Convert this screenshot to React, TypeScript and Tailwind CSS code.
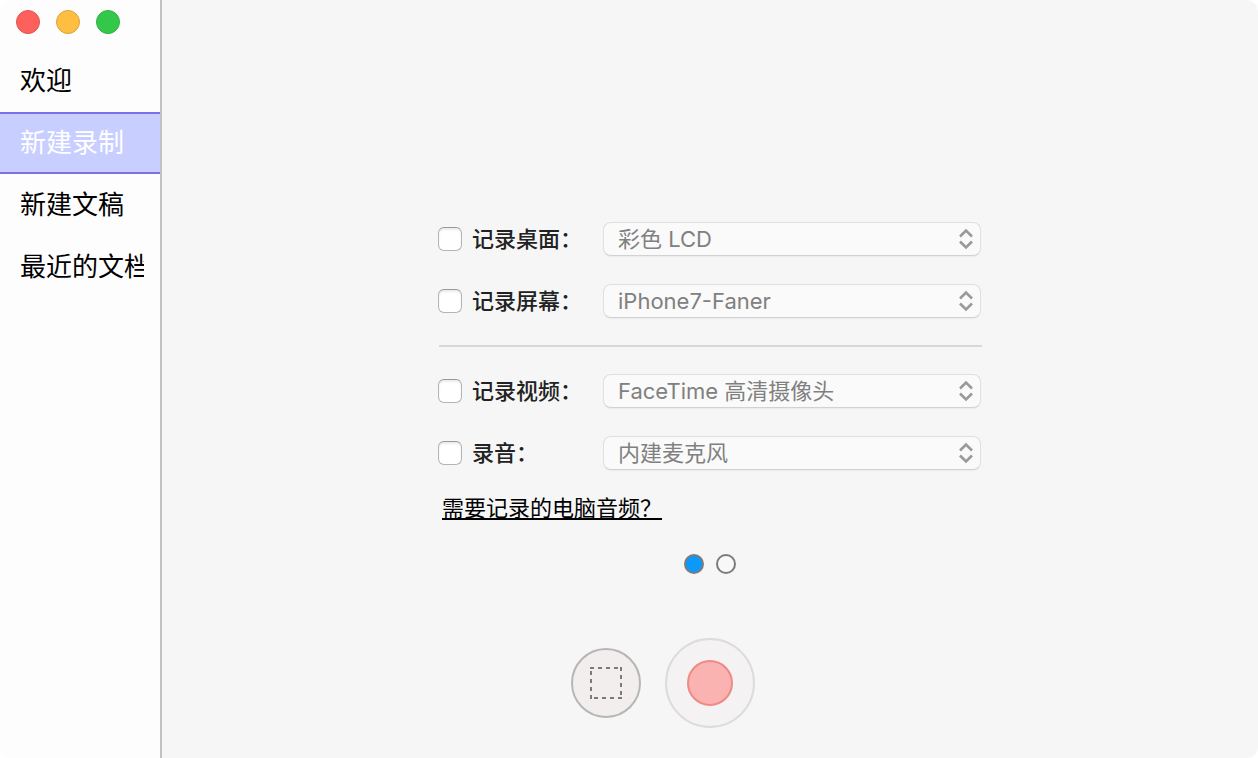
import { useState } from "react";

const navItems = ["欢迎", "新建录制", "新建文稿", "最近的文档"];

const screenSources = [
  { id: "desktop", label: "记录桌面：", option: "彩色 LCD" },
  { id: "screen", label: "记录屏幕：", option: "iPhone7-Faner" },
];

const mediaSources = [
  { id: "video", label: "记录视频：", option: "FaceTime 高清摄像头" },
  { id: "audio", label: "录音：", option: "内建麦克风" },
];

type Source = { id: string; label: string; option: string };

function SourceRow({ id, label, option }: Source) {
  const [enabled, setEnabled] = useState(false);
  return (
    <div className="flex items-center">
      <div className="flex w-[165px] shrink-0 items-center gap-2.5">
        <input
          id={id}
          type="checkbox"
          checked={enabled}
          onChange={(e) => setEnabled(e.target.checked)}
          className="size-6 shrink-0 appearance-none rounded-md border border-[#b4b4b4] border-t-[#989898] bg-white shadow-[inset_0_2px_2px_#ececec] checked:bg-[#0d99fb]"
        />
        <label htmlFor={id} className="whitespace-nowrap font-medium text-[#222222]">
          {label}
        </label>
      </div>
      <div className="relative mr-px min-w-0 flex-1">
        <select
          aria-label={label}
          disabled={!enabled}
          className="block h-[34px] w-full appearance-none rounded-lg border border-[#e0e0e0] border-b-[#d2d2d2] bg-[#fafafa] pl-3.5 pr-10 text-[#222222] shadow-[0_1px_1px_#ececec] disabled:text-[#808080]"
        >
          <option>{option}</option>
        </select>
        <svg
          viewBox="0 0 14 22"
          className="pointer-events-none absolute right-2 top-1.5 h-[22px] w-3.5"
          fill="none"
          stroke="#999999"
          strokeWidth="2.6"
        >
          <path d="M1 8.500 7 2.500l6 6M1 13.500 7 19.500l6-6" />
        </svg>
      </div>
    </div>
  );
}

export default function App() {
  const [active, setActive] = useState(1);
  const [page, setPage] = useState(0);

  return (
    <div className="flex min-h-screen overflow-hidden rounded-xl bg-[#f6f6f6] font-[Inter,'Noto_Sans_CJK_SC',sans-serif]">
      <aside className="w-[162px] shrink-0 border-r-2 border-[#c2c2c2] bg-[#fdfdfd]">
        <div className="flex h-[50px] items-start gap-4 px-4 pt-2.5">
          <button aria-label="关闭" className="size-6 rounded-full border border-[#e2544f] bg-[#fe605c]" />
          <button aria-label="最小化" className="size-6 rounded-full border border-[#dea13a] bg-[#fdbe41]" />
          <button aria-label="缩放" className="size-6 rounded-full border border-[#2fb046] bg-[#34c84b]" />
        </div>
        <nav>
          {navItems.map((item, i) => (
            <button
              key={item}
              onClick={() => setActive(i)}
              className={
                "block h-[62px] w-full border-y-2 pl-5 pr-4 text-left text-[26px] leading-9 " +
                (i === active
                  ? "border-[#7b70e6] bg-[#c8ceff] text-white"
                  : "border-transparent text-black")
              }
            >
              <span className="block overflow-hidden whitespace-nowrap">{item}</span>
            </button>
          ))}
        </nav>
      </aside>

      <main className="flex min-w-0 flex-1 flex-col items-center justify-end pb-[30px] text-[22px] leading-8">
        <form className="flex w-full max-w-[544px] flex-col" onSubmit={(e) => e.preventDefault()}>
          <div className="flex flex-col gap-7">
            {screenSources.map((s) => (
              <SourceRow key={s.id} {...s} />
            ))}
          </div>
          <hr className="my-[27px] ml-px border-t-2 border-[#d8d8d8]" />
          <div className="flex flex-col gap-7">
            {mediaSources.map((s) => (
              <SourceRow key={s.id} {...s} />
            ))}
          </div>
          <a
            href="#audio"
            className="ml-1 mt-[22px] self-start text-black underline decoration-2 underline-offset-2 [text-decoration-skip-ink:none]"
          >
            需要记录的电脑音频？
          </a>
        </form>

        <div className="mt-[30px] flex gap-3">
          {[0, 1].map((i) => (
            <button
              key={i}
              aria-label={`第 ${i + 1} 页`}
              onClick={() => setPage(i)}
              className={
                "size-5 rounded-full border-2 border-[#7b7b7b] " + (i === page ? "bg-[#0d99fb]" : "bg-[#f8f8f8]")
              }
            />
          ))}
        </div>

        <div className="mt-16 grid w-full grid-cols-[1fr_auto_1fr] items-center gap-6">
          <button
            aria-label="选择区域"
            className="flex size-[70px] items-center justify-center justify-self-end rounded-full border-2 border-[#b6b6b6] bg-[#f1eeed]"
          >
            <svg viewBox="0 0 32 32" className="size-8" fill="none" stroke="#7b7b7b" strokeWidth="2">
              <path d="M0 1H32M31 0V32" strokeDasharray="4 4" />
              <path d="M0 31H32M1 0V32" strokeDasharray="4 4" strokeDashoffset="4" />
              <path d="M30 1h2M0 31h2" />
            </svg>
          </button>
          <button
            aria-label="开始录制"
            className="flex size-[90px] items-center justify-center rounded-full border-2 border-[#dcdcdc] bg-[#f4f2f3]"
          >
            <span className="size-[46px] rounded-full border-2 border-[#ee8a85] bg-[#fab3b1]" />
          </button>
        </div>
      </main>
    </div>
  );
}
